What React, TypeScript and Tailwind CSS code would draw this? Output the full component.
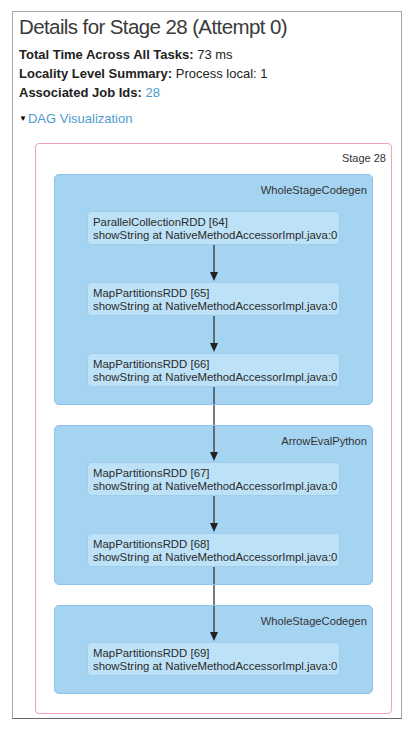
import React from 'react'

type Rdd = { name: string; call: string }

const clusters: { label: string; nodes: Rdd[]; inArrow: boolean; outArrow: boolean }[] = [
  {
    label: 'WholeStageCodegen',
    inArrow: false,
    outArrow: true,
    nodes: [
      { name: 'ParallelCollectionRDD [64]', call: 'showString at NativeMethodAccessorImpl.java:0' },
      { name: 'MapPartitionsRDD [65]', call: 'showString at NativeMethodAccessorImpl.java:0' },
      { name: 'MapPartitionsRDD [66]', call: 'showString at NativeMethodAccessorImpl.java:0' },
    ],
  },
  {
    label: 'ArrowEvalPython',
    inArrow: true,
    outArrow: true,
    nodes: [
      { name: 'MapPartitionsRDD [67]', call: 'showString at NativeMethodAccessorImpl.java:0' },
      { name: 'MapPartitionsRDD [68]', call: 'showString at NativeMethodAccessorImpl.java:0' },
    ],
  },
  {
    label: 'WholeStageCodegen',
    inArrow: true,
    outArrow: false,
    nodes: [{ name: 'MapPartitionsRDD [69]', call: 'showString at NativeMethodAccessorImpl.java:0' }],
  },
]

// vertical edge piece, optionally ending in an arrow head
const Edge = ({ h, head }: { h: number; head?: boolean }) => (
  <svg width="12" height={h} viewBox={`0 0 12 ${h}`} className="block">
    <line x1="6" y1="0" x2="6" y2={head ? h - 6 : h} stroke="#333" strokeWidth="1.3" />
    {head && <path d={`M2 ${h - 10} L10 ${h - 10} L6 ${h - 1} Z`} fill="#222" />}
  </svg>
)

const Node = ({ rdd }: { rdd: Rdd }) => (
  <div className="h-[34px] w-[253px] whitespace-nowrap rounded-[4px] border border-[#9fcdeb] bg-[#bde1f6] px-[5px] pt-[4px] text-[11.4px] leading-[12.5px] text-[#2b2b2b]">
    <div>{rdd.name}</div>
    <div>{rdd.call}</div>
  </div>
)

const App = () => {
  return (
    <div className="h-[731px] w-[413px] bg-white pt-[11px] pl-[12px]" style={{ fontFamily: '"Liberation Sans", Arial, sans-serif' }}>
      <div className="h-[708px] w-[390px] border border-[#a8a8a8] border-b-[#666] pl-[6px]">
        <h3 className="mt-[2px] text-[20.5px] leading-[26px] font-normal tracking-[-0.6px] text-[#3a3a3a]">
          Details for Stage 28 (Attempt 0)
        </h3>
        <ul className="mt-[5px] text-[13px] leading-[19px] text-[#222]">
          <li><strong>Total Time Across All Tasks:</strong> 73 ms</li>
          <li><strong>Locality Level Summary:</strong> Process local: 1</li>
          <li><strong>Associated Job Ids:</strong> <a className="text-[#4f9ccd]">28</a></li>
        </ul>
        <div className="mt-[8px] flex items-center text-[13px] leading-[18px] text-[#4f9ccd]">
          <span className="mr-[1px] text-[8px] text-black">▼</span>
          <span>DAG Visualization</span>
        </div>
        <div className="mt-[15px] ml-[16px] h-[571px] w-[357px] rounded-[4px] border border-[#f2a3b6] bg-white">
          <div className="flex h-[30px] items-start justify-end pr-[5px] pt-[7px] text-[11px] leading-[14px] text-[#333]">Stage 28</div>
          <div className="flex flex-col items-center">
            {clusters.map((c, ci) => (
              <React.Fragment key={ci}>
                {ci > 0 && <Edge h={20} />}
                <div className="relative flex w-[319px] flex-col items-center rounded-[5px] border border-[#8cc3e8] bg-[#a5d4f2]">
                  <div className="absolute top-[8px] right-[5px] text-[11.2px] leading-[14px] text-[#333]">{c.label}</div>
                  {c.inArrow ? <Edge h={36} head /> : <div className="h-[36px]" />}
                  {c.nodes.map((n, ni) => (
                    <React.Fragment key={ni}>
                      {ni > 0 && <Edge h={37} head />}
                      <Node rdd={n} />
                    </React.Fragment>
                  ))}
                  {c.outArrow ? <Edge h={17} /> : <div className="h-[17px]" />}
                </div>
              </React.Fragment>
            ))}
          </div>
        </div>
      </div>
    </div>
  )
}

export default App
